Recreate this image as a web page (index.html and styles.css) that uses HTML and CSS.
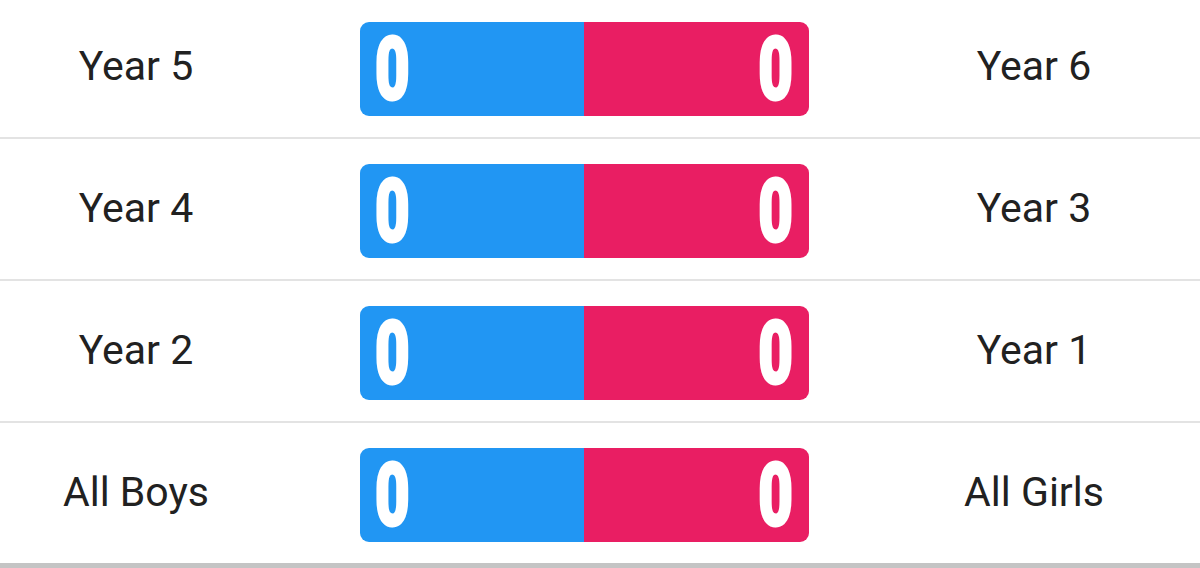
FILE: index.html
```html
<!DOCTYPE html>
<html lang="en">
<head>
<meta charset="utf-8">
<title>House Points</title>
<link rel="stylesheet" href="styles.css">
</head>
<body>
<div class="board">
  <div class="row">
    <div class="label">Year 5</div>
    <div class="bar"><div class="half boys"><span class="score">0</span></div><div class="half girls"><span class="score">0</span></div></div>
    <div class="label">Year 6</div>
  </div>
  <div class="row">
    <div class="label">Year 4</div>
    <div class="bar"><div class="half boys"><span class="score">0</span></div><div class="half girls"><span class="score">0</span></div></div>
    <div class="label">Year 3</div>
  </div>
  <div class="row">
    <div class="label">Year 2</div>
    <div class="bar"><div class="half boys"><span class="score">0</span></div><div class="half girls"><span class="score">0</span></div></div>
    <div class="label">Year 1</div>
  </div>
  <div class="row last">
    <div class="label">All Boys</div>
    <div class="bar"><div class="half boys"><span class="score">0</span></div><div class="half girls"><span class="score">0</span></div></div>
    <div class="label">All Girls</div>
  </div>
</div>
</body>
</html>
```
FILE: styles.css
```css
html, body {
  margin: 0;
  padding: 0;
  background: #ffffff;
  overflow: hidden;
}
body {
  font-family: Roboto, "Liberation Sans", sans-serif;
  color: #212121;
}
.board {
  display: flex;
  flex-direction: column;
  margin-top: -3px;
}
.row {
  display: grid;
  grid-template-columns: 272px 1fr 332px;
  align-items: center;
  padding: 25px 0 21px;
  border-bottom: 2px solid #e3e3e3;
}
.row.last {
  border-bottom: 5px solid #c4c4c4;
}
.label {
  text-align: center;
  font-size: 41px;
  line-height: 48px;
  padding-bottom: 7px;
}
.bar {
  display: flex;
  height: 94px;
  margin: 0 59px 0 88px;
}
.half {
  flex: 1;
  display: flex;
  align-items: center;
  padding: 0 15px;
}
.boys {
  background: #2196f3;
  justify-content: flex-start;
  border-radius: 9px 0 0 9px;
}
.girls {
  background: #e91e63;
  justify-content: flex-end;
  padding-right: 16px;
  border-radius: 0 9px 9px 0;
}
.score {
  color: #ffffff;
  font-size: 88px;
  font-weight: 900;
  line-height: 1;
  display: inline-block;
  -webkit-text-stroke: 3px #ffffff;
  transform: scaleX(0.68);
}
.boys .score { transform-origin: left center; }
.girls .score { transform-origin: right center; }
```
